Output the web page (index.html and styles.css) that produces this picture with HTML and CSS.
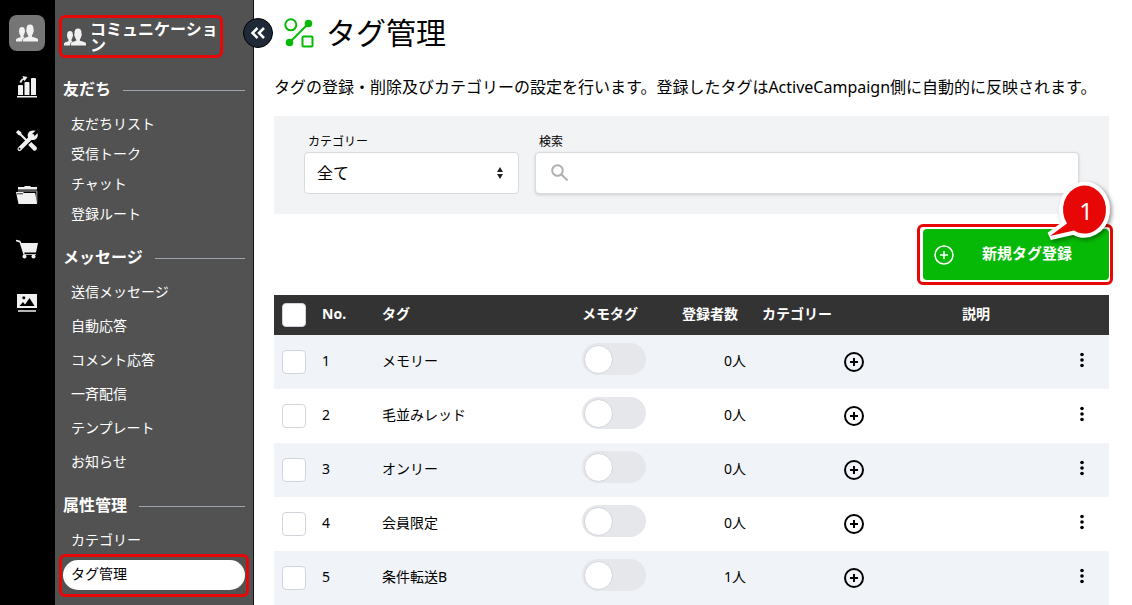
FILE: index.html
```html
<!DOCTYPE html>
<html lang="ja">
<head>
    <meta charset="UTF-8">
    <meta name="viewport" content="width=device-width, initial-scale=1.0">
    <title>タグ管理</title>
    <link rel="stylesheet" href="styles.css">
</head>
<body>
    <svg class="sprite" aria-hidden="true">
        <symbol id="icon-people" viewBox="0 0 22 18">
            <path d="M0 17.500v-1.700c.2-1.600 2.500-2 4.500-2.600v-1.600C3.600 10.500 3.300 9.600 3.200 8.500 2.700 7.500 2.900 7 3.200 6.800 3 4.200 4.200 3 6 3s3 1.200 2.800 3.800c.4.3.4 1-.1 1.800-.1 1-.5 2-1.200 2.900v1.500l1.300.6c-2 .9-2.600 1.900-2.700 3.900z"/>
            <path d="M7 17.500v-2c.2-1.400 3-1.900 5.200-2.700v-1.600c-1-1-1.300-2-1.500-3.300-.7-.8-.7-1.700-.2-2C10.200 2.300 11.600.5 14 .5s3.800 1.800 3.500 5.400c.5.3.5 1.200-.2 2-.2 1.300-.5 2.300-1.400 3.300v1.600c2.700.9 5.900 1.200 6.100 2.700v2z"/>
        </symbol>
        <symbol id="icon-plus" viewBox="0 0 20 20">
            <circle cx="10" cy="10" r="9" fill="none" stroke="currentColor"/>
            <path d="M10 6v8M6 10h8" fill="none" stroke="currentColor"/>
        </symbol>
        <symbol id="icon-dots" viewBox="0 0 4 16">
            <circle cx="2" cy="2.500" r="1.800"/>
            <circle cx="2" cy="8" r="1.800"/>
            <circle cx="2" cy="13.500" r="1.800"/>
        </symbol>
    </svg>

    <nav class="rail" aria-label="メイン">
        <a href="#" class="rail-link current" aria-label="コミュニケーション">
            <svg class="rail-icon" viewBox="0 0 22 18"><use href="#icon-people"/></svg>
        </a>
        <a href="#" class="rail-link" aria-label="分析">
            <svg class="rail-icon" viewBox="0 0 22 22">
                <path d="M1 20h20v1.500H1zM2 10q0-1 1-1h3q1 0 1 1v9H2zM8.500 7q0-1 1-1h3q1 0 1 1v12h-5zM15 3q0-1 1-1h3q1 0 1 1v16h-5z"/>
                <path d="M4.500 6.500C5 4 6.500 3 8.500 2.500" fill="none" stroke="#f1f1f1" stroke-width="1.800"/>
                <path d="M6.500 0l5 1-3 4.300z"/>
            </svg>
        </a>
        <a href="#" class="rail-link" aria-label="設定">
            <svg class="rail-icon" viewBox="0 0 22 22">
                <path d="M3.500 19L16.500 6" fill="none" stroke="#f1f1f1" stroke-width="4" stroke-linecap="round"/>
                <path d="M19.500.8l-3.700 3.500.4 2 2 .3 3.300-3.400c1 3-.7 6.600-4.500 6.800-3.600.3-6.300-3-5-6.300C13 .8 16.500-.2 19.500.8z"/>
                <path d="M0 2.200L2.200 0l3 2.200.4 1.700 6 6-1.500 1.500-6-6-1.700-.5zM12.200 15l3-3.100 5.300 5.200c1.400 1.700-.9 4.900-3 3.300z"/>
                <circle cx="3.500" cy="18.800" r="1" fill="#000"/>
            </svg>
        </a>
        <a href="#" class="rail-link" aria-label="フォルダ">
            <svg class="rail-icon" viewBox="0 0 22 20">
                <path d="M2 4.500V2h6l1-1h5l1 1h6v2.500z"/>
                <path d="M2 6h18.800v12" fill="none" stroke="#aaa"/>
                <path d="M0 7h7l1 1h10.500q.8 0 .9 1L21 19H2.500z"/>
                <path d="M1 8.800h6" stroke="#333" stroke-width="1"/>
            </svg>
        </a>
        <a href="#" class="rail-link" aria-label="ショップ">
            <svg class="rail-icon" viewBox="0 0 22 20">
                <path d="M0 .8l3.500.6q1 .3 1.300 1.300L5.300 4H22l-2 9.500H8.300l.3 1.500H20v.8H7.500L3.600 3.400 0 2.200z"/>
                <circle cx="8.500" cy="17.500" r="2"/>
                <circle cx="17.500" cy="17.500" r="2"/>
            </svg>
        </a>
        <a href="#" class="rail-link" aria-label="メディア">
            <svg class="rail-icon" viewBox="0 0 22 20">
                <path d="M1 1h20v14H1zM2 17.300h18v1.500H2z"/>
                <path d="M3.500 13L7 9l2 2.500L13.500 5l5 8z" fill="#000"/>
                <circle cx="7.800" cy="4.700" r="1.500" fill="#000"/>
            </svg>
        </a>
    </nav>

    <aside class="sidebar">
        <a href="#" class="sidebar-title">
            <svg class="title-icon" viewBox="0 0 22 18"><use href="#icon-people"/></svg>
            <span>コミュニケーション</span>
        </a>
        <button type="button" class="collapse" aria-label="メニューを閉じる">
            <svg viewBox="0 0 16 12" width="16" height="12">
                <path d="M7.500 1L2.500 6l5 5M14 1L9 6l5 5" fill="none" stroke="#fff" stroke-width="2.500"/>
            </svg>
        </button>

        <h2 class="menu-heading">友だち</h2>
        <ul class="menu compact">
            <li><a href="#">友だちリスト</a></li>
            <li><a href="#">受信トーク</a></li>
            <li><a href="#">チャット</a></li>
            <li><a href="#">登録ルート</a></li>
        </ul>
        <h2 class="menu-heading">メッセージ</h2>
        <ul class="menu">
            <li><a href="#">送信メッセージ</a></li>
            <li><a href="#">自動応答</a></li>
            <li><a href="#">コメント応答</a></li>
            <li><a href="#">一斉配信</a></li>
            <li><a href="#">テンプレート</a></li>
            <li><a href="#">お知らせ</a></li>
        </ul>
        <h2 class="menu-heading">属性管理</h2>
        <ul class="menu">
            <li><a href="#">カテゴリー</a></li>
            <li><a href="#" class="active">タグ管理</a></li>
        </ul>
    </aside>

    <main class="content">
        <div class="page-title">
            <svg class="page-icon" viewBox="0 0 30 30">
                <g fill="none" stroke="#06b906" stroke-width="2">
                    <circle cx="6.800" cy="6.800" r="5.500"/>
                    <path d="M6 24L24 6"/>
                    <rect x="18.500" y="18.500" width="10" height="10" rx="1"/>
                </g>
                <circle cx="24.500" cy="5.500" r="3.800" fill="#06b906"/>
                <circle cx="5.500" cy="24.500" r="3.800" fill="#06b906"/>
            </svg>
            <h1>タグ管理</h1>
        </div>
        <p class="description">タグの登録・削除及びカテゴリーの設定を行います。登録したタグはActiveCampaign側に自動的に反映されます。</p>

        <form class="filter">
            <div class="field field-category">
                <label for="category">カテゴリー</label>
                <div class="control">
                    <select id="category">
                        <option>全て</option>
                    </select>
                    <svg class="select-arrows" viewBox="0 0 8 14"><path d="M4 1l3 5H1zM4 13L1 8h6z"/></svg>
                </div>
            </div>
            <div class="field field-search">
                <label for="search">検索</label>
                <div class="control">
                    <input type="text" id="search">
                    <svg class="search-icon" viewBox="0 0 18 18">
                        <circle cx="6.500" cy="6.500" r="5.300"/>
                        <path d="M10.500 10.500l6 6"/>
                    </svg>
                </div>
            </div>
        </form>

        <div class="actions">
            <button type="button" class="add-button">
                <svg class="add-icon"><use href="#icon-plus"/></svg>
                <span>新規タグ登録</span>
            </button>
            <div class="callout">
                <svg viewBox="0 0 80 64" width="80" height="64">
                    <path d="M28 39.500L11 52l24-5.500A21.500 24 0 1 0 28 39.500z" fill="#e80707" stroke="#fff" stroke-width="8" paint-order="stroke" stroke-linejoin="miter"/>
                </svg>
                <span>1</span>
            </div>
        </div>

        <table class="tags">
            <colgroup>
                <col class="col-check">
                <col class="col-no">
                <col class="col-tag">
                <col class="col-memo">
                <col class="col-count">
                <col class="col-category">
                <col>
                <col class="col-menu">
            </colgroup>
            <thead>
                <tr>
                    <th class="select"><input type="checkbox" class="check" aria-label="全て選択"></th>
                    <th>No.</th>
                    <th>タグ</th>
                    <th>メモタグ</th>
                    <th>登録者数</th>
                    <th>カテゴリー</th>
                    <th>説明</th>
                    <th></th>
                </tr>
            </thead>
            <tbody>
                <tr>
                    <td class="select"><input type="checkbox" class="check" aria-label="メモリーを選択"></td>
                    <td>1</td>
                    <td>メモリー</td>
                    <td><input type="checkbox" class="switch" aria-label="メモタグ"></td>
                    <td class="count">0人</td>
                    <td class="center"><button type="button" class="icon-button" aria-label="カテゴリーを追加"><svg class="plus"><use href="#icon-plus"/></svg></button></td>
                    <td></td>
                    <td class="center more"><button type="button" class="icon-button" aria-label="メニュー"><svg class="dots"><use href="#icon-dots"/></svg></button></td>
                </tr>
                <tr>
                    <td class="select"><input type="checkbox" class="check" aria-label="毛並みレッドを選択"></td>
                    <td>2</td>
                    <td>毛並みレッド</td>
                    <td><input type="checkbox" class="switch" aria-label="メモタグ"></td>
                    <td class="count">0人</td>
                    <td class="center"><button type="button" class="icon-button" aria-label="カテゴリーを追加"><svg class="plus"><use href="#icon-plus"/></svg></button></td>
                    <td></td>
                    <td class="center more"><button type="button" class="icon-button" aria-label="メニュー"><svg class="dots"><use href="#icon-dots"/></svg></button></td>
                </tr>
                <tr>
                    <td class="select"><input type="checkbox" class="check" aria-label="オンリーを選択"></td>
                    <td>3</td>
                    <td>オンリー</td>
                    <td><input type="checkbox" class="switch" aria-label="メモタグ"></td>
                    <td class="count">0人</td>
                    <td class="center"><button type="button" class="icon-button" aria-label="カテゴリーを追加"><svg class="plus"><use href="#icon-plus"/></svg></button></td>
                    <td></td>
                    <td class="center more"><button type="button" class="icon-button" aria-label="メニュー"><svg class="dots"><use href="#icon-dots"/></svg></button></td>
                </tr>
                <tr>
                    <td class="select"><input type="checkbox" class="check" aria-label="会員限定を選択"></td>
                    <td>4</td>
                    <td>会員限定</td>
                    <td><input type="checkbox" class="switch" aria-label="メモタグ"></td>
                    <td class="count">0人</td>
                    <td class="center"><button type="button" class="icon-button" aria-label="カテゴリーを追加"><svg class="plus"><use href="#icon-plus"/></svg></button></td>
                    <td></td>
                    <td class="center more"><button type="button" class="icon-button" aria-label="メニュー"><svg class="dots"><use href="#icon-dots"/></svg></button></td>
                </tr>
                <tr>
                    <td class="select"><input type="checkbox" class="check" aria-label="条件転送Bを選択"></td>
                    <td>5</td>
                    <td>条件転送B</td>
                    <td><input type="checkbox" class="switch" aria-label="メモタグ"></td>
                    <td class="count">1人</td>
                    <td class="center"><button type="button" class="icon-button" aria-label="カテゴリーを追加"><svg class="plus"><use href="#icon-plus"/></svg></button></td>
                    <td></td>
                    <td class="center more"><button type="button" class="icon-button" aria-label="メニュー"><svg class="dots"><use href="#icon-dots"/></svg></button></td>
                </tr>
            </tbody>
        </table>
    </main>
</body>
</html>
```
FILE: styles.css
```css
* {
    box-sizing: border-box;
}
body {
    margin: 0;
    display: flex;
    min-height: 100vh;
    font-family: "Noto Sans", "Noto Sans CJK JP", sans-serif;
    font-size: 14px;
    line-height: 20px;
    color: #000;
    background-color: #fff;
}
button, input, select {
    font: inherit;
    color: inherit;
    margin: 0;
}
button {
    cursor: pointer;
}
a {
    color: inherit;
    text-decoration: none;
}
h1, h2, p, ul {
    margin: 0;
    padding: 0;
}
.sprite {
    position: absolute;
    width: 0;
    height: 0;
}

/* 左のアイコンバー */
.rail {
    flex: none;
    width: 55px;
    padding: 15px 10px 0 9px;
    display: flex;
    flex-direction: column;
    gap: 18px;
    background-color: #000;
}
.rail-link {
    height: 36px;
    display: flex;
    align-items: center;
    justify-content: center;
    border-radius: 8px;
}
.rail-link.current {
    background-color: #757575;
}
.rail-icon {
    width: 22px;
    height: 22px;
    fill: #f1f1f1;
}

/* サイドバー */
.sidebar {
    position: relative;
    flex: none;
    width: 199px;
    padding: 15px 8px 8px;
    color: #fff;
    background-color: #525252;
    border-right: 1px solid #111;
}
.sidebar-title {
    display: flex;
    align-items: center;
    width: 164px;
    height: 43px;
    margin-left: -4px;
    padding: 0 2px;
    gap: 4px;
    border: 3px solid #e80707;
    border-radius: 6px;
    font-size: 16px;
    line-height: 16px;
    font-weight: bold;
}
.title-icon {
    flex: none;
    width: 22px;
    height: 18px;
    fill: #f1f1f1;
}
.collapse {
    position: absolute;
    top: 18px;
    right: -20px;
    width: 30px;
    height: 30px;
    padding: 0;
    display: flex;
    align-items: center;
    justify-content: center;
    border: 1px solid #000;
    border-radius: 50%;
    background-color: #1f2937;
}
.menu-heading {
    display: flex;
    align-items: center;
    gap: 12px;
    margin: 15px 0 9px;
    font-size: 16px;
    line-height: 24px;
}
.sidebar-title ~ .menu-heading:first-of-type {
    margin-top: 19px;
}
.menu-heading::after {
    content: "";
    flex: 1;
    height: 1px;
    margin-top: 3px;
    background-color: #9ca3af;
}
.menu {
    display: flex;
    flex-direction: column;
    gap: 4px;
    list-style: none;
}
.menu.compact {
    gap: 0;
}
.menu a {
    position: relative;
    display: block;
    height: 30px;
    padding: 0 8px;
    line-height: 27px;
    border-radius: 15px;
}
.menu a.active {
    color: #000;
    background-color: #fff;
}
.menu a.active::after {
    content: "";
    position: absolute;
    inset: -6px -4px -7px;
    border: 3px solid #e80707;
    border-radius: 6px;
}

/* メイン */
.content {
    flex: 1;
    min-width: 0;
    padding: 15px 23px 0 20px;
}
.page-title {
    display: flex;
    align-items: center;
    gap: 12px;
    height: 36px;
    padding-left: 10px;
}
.page-icon {
    width: 30px;
    height: 30px;
}
h1 {
    font-size: 30px;
    line-height: 36px;
    font-weight: normal;
}
.description {
    margin: 24px 0 17px;
    font-size: 16px;
    line-height: 24px;
}
.filter {
    display: flex;
    gap: 16px;
    padding: 16px 30px 20px;
    background-color: #f2f3f5;
}
.field-category {
    width: 215px;
}
.field-search {
    flex: 1;
}
.field label {
    display: block;
    padding-left: 4px;
    font-size: 12px;
    line-height: 20px;
}
.control {
    position: relative;
}
.control select, .control input {
    display: block;
    width: 100%;
    height: 42px;
    padding: 0 12px;
    font-size: 16px;
    background-color: #fff;
    border: 1px solid #d9dadc;
    border-radius: 4px;
    appearance: none;
}
.control input {
    padding-left: 44px;
    box-shadow: 0 1px 3px rgba(0, 0, 0, 0.15);
}
.select-arrows {
    position: absolute;
    right: 15px;
    top: 14px;
    width: 8px;
    height: 14px;
    fill: #222;
}
.search-icon {
    position: absolute;
    left: 16px;
    top: 12px;
    width: 18px;
    height: 18px;
    fill: none;
    stroke: #b0b0b0;
    stroke-width: 2;
}
.actions {
    position: relative;
    display: flex;
    justify-content: flex-end;
    padding: 15px 0;
}
.add-button {
    position: relative;
    display: flex;
    align-items: center;
    width: 186px;
    height: 51px;
    padding: 0 12px 0 11px;
    gap: 28px;
    color: #fff;
    font-size: 15px;
    font-weight: bold;
    background-color: #06b906;
    border: none;
    border-radius: 4px;
}
.add-button span {
    padding-bottom: 3px;
}
.add-button::after {
    content: "";
    position: absolute;
    inset: -5px -4px -5px -6px;
    border: 3px solid #e80707;
    border-radius: 6px;
}
.add-icon {
    width: 20px;
    height: 20px;
    stroke-width: 1.5;
}
.callout {
    position: absolute;
    right: -10px;
    top: -30px;
    width: 80px;
    height: 64px;
    color: #fff;
}
.callout svg {
    display: block;
    overflow: visible;
    filter: drop-shadow(2px 2px 2px rgba(0, 0, 0, 0.4));
}
.callout span {
    position: absolute;
    right: 26px;
    top: 11px;
    font-size: 24px;
    line-height: 32px;
}

/* タグ一覧 */
.tags {
    width: 100%;
    table-layout: fixed;
    border-collapse: collapse;
}
.col-check { width: 40px; }
.col-no { width: 60px; }
.col-tag { width: 200px; }
.col-memo { width: 100px; }
.col-count { width: 80px; }
.col-category { width: 200px; }
.col-menu { width: 55px; }
.tags th, .tags td {
    padding: 0 8px 2px;
    text-align: left;
    white-space: nowrap;
}
.tags th.select, .tags td.select {
    padding-bottom: 0;
}
.tags th {
    height: 40px;
    color: #fff;
    background-color: #333;
}
.tags td {
    height: 54px;
}
.tags tbody tr:nth-child(odd) {
    background-color: #f0f3f8;
}
.tags .count {
    text-align: right;
}
.tags .center {
    text-align: center;
}
.tags td.more {
    padding-bottom: 6px;
}
.check {
    appearance: none;
    display: block;
    width: 24px;
    height: 24px;
    background-color: #fff;
    border: 1px solid #d1d5db;
    border-radius: 4px;
}
.switch {
    appearance: none;
    display: block;
    width: 64px;
    height: 32px;
    margin-bottom: 4px;
    padding: 2px;
    background-color: #e5e7eb;
    border-radius: 16px;
}
.switch::before {
    content: "";
    display: block;
    width: 27px;
    height: 27px;
    background-color: #fff;
    border: 1px solid #d1d5db;
    border-radius: 50%;
}
.switch:checked::before {
    margin-left: 33px;
}
.icon-button {
    padding: 0;
    border: none;
    background: none;
    vertical-align: middle;
}
.icon-button svg {
    display: block;
}
.plus {
    width: 20px;
    height: 20px;
    stroke-width: 2;
}
.dots {
    width: 4px;
    height: 16px;
}
```
